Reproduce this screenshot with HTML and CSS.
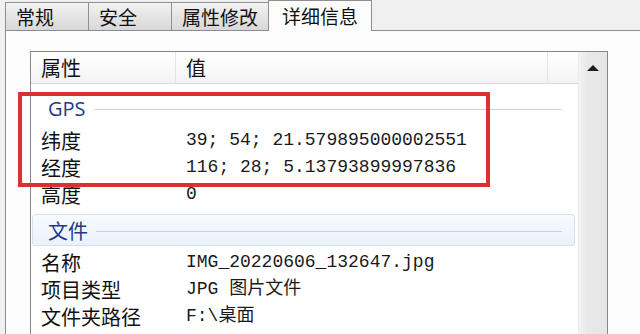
FILE: index.html
```html
<!DOCTYPE html>
<html lang="zh-CN">
<head>
  <meta charset="UTF-8" />
  <title>详细信息</title>
  <link rel="stylesheet" href="styles.css">
</head>
<body>
  <div class="tabs">
    <div class="tab wide">常规</div>
    <div class="tab wide">安全</div>
    <div class="tab">属性修改</div>
    <div class="tab active">详细信息</div>
  </div>

  <div class="panel">
    <div class="list">
      <div class="list-main">
        <div class="head">
          <div class="col-name">属性</div>
          <div class="col-value">值</div>
          <div class="col-rest"></div>
        </div>

        <div class="group"><span>GPS</span><i></i></div>
        <div class="row"><div class="name">纬度</div><div class="value">39; 54; 21.579895000002551</div></div>
        <div class="row"><div class="name">经度</div><div class="value">116; 28; 5.13793899997836</div></div>
        <div class="row"><div class="name">高度</div><div class="value">0</div></div>

        <div class="group hot"><span class="cjk">文件</span><i></i></div>
        <div class="row"><div class="name">名称</div><div class="value">IMG_20220606_132647.jpg</div></div>
        <div class="row"><div class="name">项目类型</div><div class="value">JPG 图片文件</div></div>
        <div class="row"><div class="name">文件夹路径</div><div class="value">F:\桌面</div></div>
      </div>
      <div class="scrollbar">
        <div class="arrow-btn"><span class="arrow-up"></span></div>
      </div>
    </div>
  </div>

  <!-- 红框标注 -->
  <div class="mark"></div>
</body>
</html>
```

FILE: styles.css
```css
body {
  margin: 0;
  background: #f0f0f0;
  font-family: "Noto Sans CJK SC", "Noto Sans", sans-serif;
  color: #111;
  overflow: hidden;
  height: 334px;
}
.tabs {
  display: flex;
  align-items: flex-end;
  height: 30px;
  padding-left: 5px;
}
.tab {
  box-sizing: border-box;
  height: 28px;
  padding: 0 10px;
  border: 1px solid #8e8f8f;
  border-bottom: none;
  margin-right: -1px;
  background: linear-gradient(#f3f3f3, #e4e4e4 50%, #d8d8d8);
  font-size: 19px;
  line-height: 27px;
  white-space: nowrap;
}
.tab.wide {
  min-width: 84px;
}
.tab.active {
  position: relative;
  z-index: 1;
  height: 31px;
  margin-bottom: -1px;
  padding: 0 13px;
  background: #fcfcfc;
  line-height: 30px;
}
.panel {
  margin-left: 5px;
  border-left: 1px solid #898c95;
  border-top: 1px solid #898c95;
  background: #fcfcfc;
  padding: 20px 0 0 24px;
  height: 320px;
}
.list {
  display: flex;
  width: 578px;
  height: 320px;
  box-sizing: border-box;
  border: 1px solid #828790;
  background: #fff;
}
.list-main {
  width: 548px;
}
.head {
  display: flex;
  height: 31px;
  border-bottom: 1px solid #d9dbde;
  background: linear-gradient(#ffffff, #f2f3f5);
  font-size: 20px;
  line-height: 31px;
}
.col-name {
  box-sizing: border-box;
  width: 145px;
  padding-left: 10px;
  border-right: 1px solid #e2e4e7;
}
.col-value {
  box-sizing: border-box;
  width: 372px;
  padding-left: 10px;
  border-right: 1px solid #e2e4e7;
}
.col-rest {
  flex: 1;
}
.group {
  display: flex;
  align-items: center;
  box-sizing: border-box;
  height: 32px;
  margin: 8px 3px 3px 1px;
  padding-left: 15px;
  border: 1px solid transparent;
  border-radius: 3px;
}
.group span {
  font-family: "Open Sans", "Noto Sans CJK SC", sans-serif;
  font-size: 20px;
  color: #1f3a8c;
}
.group span.cjk {
  font-family: "Noto Sans CJK SC", sans-serif;
}
.group i {
  flex: 1;
  height: 1px;
  margin: 2px 12px 0 8px;
  background: #c5d2e1;
}
.group.hot {
  margin-top: 6px;
  background: linear-gradient(#f8fbfe, #e9f1fa);
  border-color: #d3e2f1;
}
.row {
  display: flex;
  height: 27px;
  line-height: 27px;
  white-space: nowrap;
}
.name {
  box-sizing: border-box;
  width: 145px;
  padding-left: 10px;
  font-size: 20px;
}
.value {
  padding-left: 10px;
  font-family: "Liberation Mono", "Noto Sans CJK SC", monospace;
  font-size: 18px;
  color: #1a1a1a;
}
.scrollbar {
  width: 28px;
  background: linear-gradient(90deg, #f3f3f3, #e8e8e8 30%, #e6e6e6);
  border-left: 1px solid #ececec;
}
.arrow-btn {
  display: flex;
  justify-content: center;
  padding-top: 13px;
  height: 18px;
}
.arrow-up {
  width: 0;
  height: 0;
  border-left: 6px solid transparent;
  border-right: 6px solid transparent;
  border-bottom: 6px solid #1e1e1e;
}
.mark {
  position: absolute;
  left: 18px;
  top: 92px;
  width: 472px;
  height: 95px;
  box-sizing: border-box;
  border: 4px solid #dc2f2f;
}
```
